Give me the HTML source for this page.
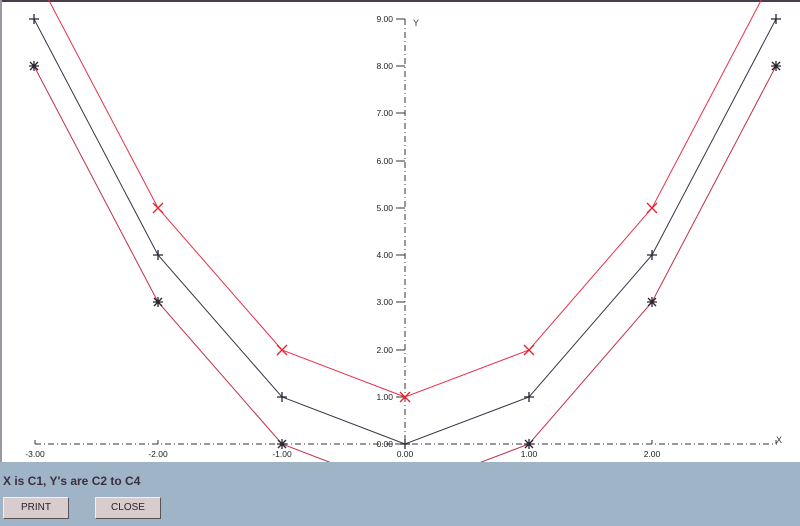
<!DOCTYPE html>
<html><head><meta charset="utf-8"><style>
html,body{margin:0;padding:0;width:800px;height:526px;overflow:hidden;background:#a0b4c8;font-family:"Liberation Sans",sans-serif}
#plot{position:absolute;left:0;top:0;width:800px;height:462px;background:#fff}
#lbl{position:absolute;left:3px;top:474px;font-size:12px;font-weight:bold;color:#3a3040}
.btn{position:absolute;top:497px;width:66px;height:22px;background:#d8cccc;border:1px solid;border-color:#f4eeee #5a5058 #5a5058 #f4eeee;box-sizing:border-box;font-size:10px;color:#2a2430;text-align:center;line-height:20px}
</style></head><body>
<svg id="plot" width="800" height="462" viewBox="0 0 800 462" xmlns="http://www.w3.org/2000/svg" font-family="Liberation Sans, sans-serif" font-size="8.5">
<rect x="0" y="0" width="800" height="2" fill="#4a3c4a"/>
<rect x="0" y="0" width="2" height="462" fill="#9a98a0"/>
<!-- axes -->
<line x1="35" y1="444" x2="777" y2="444" stroke="#333" stroke-dasharray="6,3,1,3"/>
<line x1="405" y1="19" x2="405" y2="444" stroke="#333" stroke-dasharray="6,3,1,3"/>
<g stroke="#333">
<line x1="35" y1="440" x2="35" y2="444"/><line x1="158" y1="440" x2="158" y2="444"/><line x1="282" y1="440" x2="282" y2="444"/><line x1="529" y1="440" x2="529" y2="444"/><line x1="652" y1="440" x2="652" y2="444"/><line x1="776" y1="440" x2="776" y2="444"/>
<line x1="396" y1="19" x2="405" y2="19"/><line x1="396" y1="66" x2="405" y2="66"/><line x1="396" y1="113" x2="405" y2="113"/><line x1="396" y1="161" x2="405" y2="161"/><line x1="396" y1="208" x2="405" y2="208"/><line x1="396" y1="255" x2="405" y2="255"/><line x1="396" y1="302" x2="405" y2="302"/><line x1="396" y1="350" x2="405" y2="350"/><line x1="396" y1="397" x2="405" y2="397"/><line x1="396" y1="444" x2="405" y2="444"/>
</g>
<g fill="#222" text-anchor="end">
<text x="393" y="22">9.00</text><text x="393" y="69">8.00</text><text x="393" y="116">7.00</text><text x="393" y="164">6.00</text><text x="393" y="211">5.00</text><text x="393" y="258">4.00</text><text x="393" y="305">3.00</text><text x="393" y="353">2.00</text><text x="393" y="400">1.00</text><text x="393" y="447">0.00</text>
</g>
<g fill="#222" text-anchor="middle">
<text x="35" y="457">-3.00</text><text x="158" y="457">-2.00</text><text x="282" y="457">-1.00</text><text x="405" y="457">0.00</text><text x="529" y="457">1.00</text><text x="652" y="457">2.00</text>
</g>
<text x="413" y="26" fill="#333" font-size="9">Y</text>
<text x="776" y="443" fill="#333" font-size="9">X</text>
<!-- series -->
<polyline fill="none" stroke="#e8304a" points="34,-28 158,208 282,350 405,397 529,350 652,208 776,-28"/>
<polyline fill="none" stroke="#c0304a" points="34,66 158,302 282,444 405,491 529,444 652,302 776,66"/>
<polyline fill="none" stroke="#3a3448" points="34,19 158,255 282,397 405,444 529,397 652,255 776,19"/>
<g stroke="#2a2430" stroke-width="1.3">
<path d="M29 19h10M34 14v10M153 255h10M158 250v10M277 397h10M282 392v10M400 444h10M405 439v10M524 397h10M529 392v10M647 255h10M652 250v10M771 19h10M776 14v10"/>
<path d="M29 66h10M34 61v10M30 62l8 8M38 62l-8 8 M153 302h10M158 297v10M154 298l8 8M162 298l-8 8 M277 444h10M282 439v10M278 440l8 8M286 440l-8 8 M524 444h10M529 439v10M525 440l8 8M533 440l-8 8 M647 302h10M652 297v10M648 298l8 8M656 298l-8 8 M771 66h10M776 61v10M772 62l8 8M780 62l-8 8"/>
</g>
<g stroke="#e8202a" stroke-width="1.3">
<path d="M153 203l10 10M163 203l-10 10 M277 345l10 10M287 345l-10 10 M400 392l10 10M410 392l-10 10 M524 345l10 10M534 345l-10 10 M647 203l10 10M657 203l-10 10"/>
</g>
</svg>
<div id="lbl">X is C1, Y's are C2 to C4</div>
<div class="btn" style="left:3px">PRINT</div>
<div class="btn" style="left:95px">CLOSE</div>
</body></html>
